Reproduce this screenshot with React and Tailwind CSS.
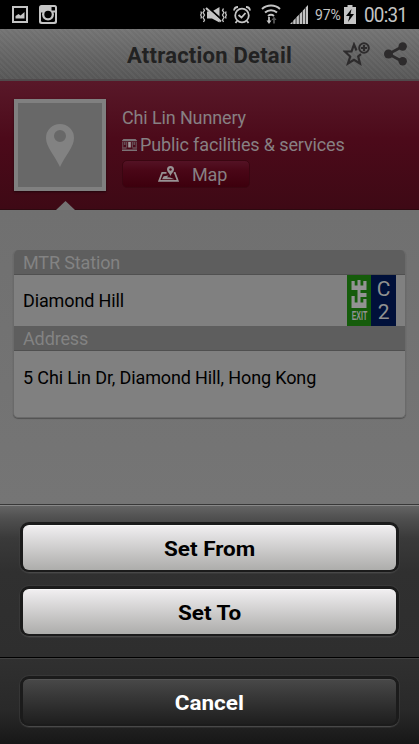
const details = {
  name: "Chi Lin Nunnery",
  category: "Public facilities & services",
  station: "Diamond Hill",
  exit: ["C", "2"],
  address: "5 Chi Lin Dr, Diamond Hill, Hong Kong",
}

function StatusBar() {
  return (
    <div className="h-[29px] bg-black flex items-center justify-between text-[#c4c4c4]">
      <div className="flex items-center gap-[11px] pl-3">
        <svg width="16" height="17" viewBox="0 0 16 17" fill="none">
          <rect x="1" y="1" width="14" height="15" stroke="currentColor" strokeWidth="2" />
          <path d="M3.500 12.500V10l3-2 2 1.500 4-3.500v6.500z" fill="currentColor" />
        </svg>
        <svg width="18" height="19" viewBox="0 0 18 19">
          <rect width="18" height="19" rx="2.500" fill="currentColor" />
          <path d="M2 7.500h14V15.500a1.500 1.500 0 0 1-1.500 1.500h-11A1.500 1.500 0 0 1 2 15.500z" fill="#000" />
          <circle cx="9" cy="9.500" r="6" fill="currentColor" />
          <circle cx="9" cy="9.500" r="3.700" fill="#000" />
          <rect x="12.500" y="2" width="3.500" height="3.500" rx=".5" fill="#000" />
        </svg>
      </div>

      <div className="flex items-center pr-[12px]">
        {/* vibrate / muted */}
        <svg className="mr-[6px]" width="27" height="20" viewBox="0 0 27 20" fill="none" stroke="currentColor">
          <path d="M3.500 3.500l1 2-1.500 2 1.500 2.500L3 12.500l1.500 2.500-1 2M.8 6.500l.7 1.500-.8 2 .8 2-.7 1.500" strokeWidth="1.300" />
          <path d="M23.500 3.500l-1 2 1.500 2-1.500 2.500 1.500 2.500-1.500 2.500 1 2M26.200 6.500l-.7 1.500.8 2-.8 2 .7 1.500" strokeWidth="1.300" />
          <path d="M7 6.500h5L19.500 2v15.500L12 13.500H7z" fill="currentColor" stroke="none" />
          <path d="M7.500 2l14 12.500" stroke="#000" strokeWidth="2" />
          <path d="M6 3l15 13.500" strokeWidth="2" />
        </svg>
        {/* alarm */}
        <svg className="mr-[10px]" width="18" height="20" viewBox="0 0 18 20" fill="none" stroke="currentColor" strokeWidth="1.800">
          <circle cx="9" cy="10.500" r="6.800" />
          <path d="M5.500 10l3 2.500L12.500 8M1 5.500a4 4 0 0 1 4-3.500M17 5.500a4 4 0 0 0-4-3.500M4 16l-1.500 2M14 16l1.500 2" />
        </svg>
        {/* wifi with traffic arrows */}
        <svg className="mr-[9px]" width="20" height="21" viewBox="0 0 20 21" fill="none" stroke="currentColor" strokeWidth="2">
          <path d="M1 5a13.500 13.500 0 0 1 18 0M4 8.500a9 9 0 0 1 12 0M7 12a4.800 4.800 0 0 1 6 0" />
          <path d="M8 13v5" strokeWidth="1.800" />
          <path d="M5.500 16.500h5L8 20z" fill="currentColor" stroke="none" />
          <path d="M13 19.500V15" stroke="#555" strokeWidth="1.800" />
          <path d="M10.500 16h5L13 12.500z" fill="#555" stroke="none" />
        </svg>
        <svg className="mr-[7px]" width="18" height="19" viewBox="0 0 18 19" fill="currentColor">
          <path d="M0 19l2.500-2.500V19zM3.200 15.700L5.700 13V19H3.200zM6.400 12.300l2.500-2.600V19H6.400zM9.600 9l2.500-2.600V19H9.600zM12.700 5.700L15 3.300V19h-2.300zM15.600 2.500L18 0v19h-2.400z" />
        </svg>
        <span className="text-[14px] leading-none w-[25px] whitespace-nowrap tracking-[-0.1px]">97%</span>
        <svg className="ml-[4px] mr-[8px]" width="12" height="19" viewBox="0 0 12 19">
          <path d="M3.500 0h5v2H12v17H0V2h3.500z" fill="currentColor" />
          <path d="M7.500 4L2 11h3.500L4 17l6-8H6.500z" fill="#000" />
        </svg>
        <span className="text-[20px] leading-none w-[43px] whitespace-nowrap tracking-[-0.8px] scale-x-[0.94] origin-left pt-px">00:31</span>
      </div>
    </div>
  )
}

function Header() {
  return (
    <div className="h-[52px] shrink-0 border-b-2 border-[#504a4c] bg-[repeating-linear-gradient(45deg,rgba(255,255,255,0.035)_0px,rgba(255,255,255,0.035)_2px,transparent_2px,transparent_4px),linear-gradient(#737373,#565656)] grid grid-cols-[1fr_auto_1fr] items-center text-[#222]">
      <span />
      <h1 className="text-[22px] font-bold leading-none pt-[3px] tracking-[0.24px]">Attraction Detail</h1>
      <div className="flex items-center justify-end gap-[13px] pr-3">
        <svg className="mr-px" width="27" height="25" viewBox="0 0 27 25" fill="none" stroke="#2d2b2c">
          <path d="M13.500 8.500L11 2.500L8.500 9.500H1.800l5.400 5L5 21.500l6-3.800 6 3.800-1.800-7 2.800-2.300" strokeWidth="2.200" />
          <circle cx="21" cy="6" r="4.800" strokeWidth="2" />
          <path d="M21 3v6M18 6h6" strokeWidth="2.200" />
        </svg>
        <svg width="23" height="24" viewBox="0 0 23 24" fill="#2d2b2c">
          <path d="M18.500 4.500L4.500 12l14 7.500" fill="none" stroke="#2d2b2c" strokeWidth="2.700" />
          <circle cx="18.700" cy="4.500" r="4.200" />
          <circle cx="4.500" cy="12" r="4.500" />
          <circle cx="18.700" cy="19.300" r="4.200" />
        </svg>
      </div>
    </div>
  )
}

function Hero() {
  return (
    <div className="relative h-[129px] flex items-start bg-linear-to-b from-[#591829] via-[#4c0a1a] via-45% to-[#3e0915] border-b border-[#2d0910] text-[#878083]">
      <div className="ml-[14px] mt-[18px] size-[92px] bg-[#686868] border-4 border-[#808080] shadow-[0_1px_2px_rgba(0,0,0,0.5)] flex items-center justify-center">
        <svg width="28" height="43" viewBox="0 0 28 43">
          <path d="M14 0a14 14 0 0 1 14 14c0 9-9 18-14 29C9 32 0 23 0 14A14 14 0 0 1 14 0zm0 6a6 6 0 1 0 0 12 6 6 0 0 0 0-12z" fill="#828282" fillRule="evenodd" />
        </svg>
      </div>
      <div className="ml-4 pt-[25px] text-[18px] leading-[24px] tracking-[-0.13px] whitespace-nowrap">
        <p>{details.name}</p>
        <div className="flex items-center gap-[3px] mt-[3px]">
          <svg width="15" height="12" viewBox="0 0 15 12">
            <path d="M0 10.500h15V12H0zM1.500 0h12L15 1.500v.7H0v-.7zM0 8.500h4.500v1H0zM10.500 8.500H15v1h-4.500z" fill="#7b7276" />
            <path d="M.3 3h1v5.500h-1zM2.200 3h1.200v3H2.200zM4.200 3h1v5.500h-1zM9.800 3h1v5.500h-1zM11.600 3h1.200v3h-1.200zM13.700 3h1v5.500h-1z" fill="#6d5d63" />
            <path d="M6.200 3h2.600v5.500H6.200z" fill="#a09a9c" />
          </svg>
          <p>{details.category}</p>
        </div>
        <button className="mt-[3px] w-[128px] h-[28px] rounded-[5px] border border-[#3a0611] bg-linear-to-b from-[#541225] via-[#4a0717] via-35% to-[#3d000d] flex items-center pl-[35px] gap-[13px]">
          <svg width="21" height="16" viewBox="0 0 21 16" fill="none" stroke="#989294">
            <path d="M8.500 6.800H4.200L1.200 14.800h18.600l-3-8h-1" strokeWidth="1.800" />
            <path d="M4 13.200h12.500l-4.500-1.700-3-.3 1.500-1.700-4.800.8z" fill="#989294" stroke="none" />
            <path d="M12.500 0A3.600 3.600 0 0 1 16 3.600c0 2.400-3 3.900-3.500 6.900-.5-3-3.500-4.500-3.500-6.900A3.600 3.600 0 0 1 12.500 0z" fill="#989294" stroke="none" />
            <circle cx="12.500" cy="3.500" r="1.200" fill="#4a0818" stroke="none" />
          </svg>
          <span className="pt-px">Map</span>
        </button>
      </div>
      {/* notch under the thumbnail */}
      <svg className="absolute left-[56px] -bottom-px" width="19" height="9" viewBox="0 0 19 9">
        <path d="M0 9L9.500 0L19 9z" fill="#747474" />
      </svg>
    </div>
  )
}

function SectionTitle({ children }) {
  return (
    <div className="h-[25px] shrink-0 bg-[#5e5e5e] border-b border-[#505050] pl-[9px] text-[18px] leading-[25px] text-[#838383]">
      {children}
    </div>
  )
}

function InfoCard() {
  return (
    <div className="mx-[13px] mt-[40px] h-[168px] rounded-[5px] bg-[#808080] border border-t-0 border-[#6a6a6a] overflow-hidden shadow-[0_1px_1px_rgba(0,0,0,0.3)] text-[18px] tracking-[-0.13px]">
      <SectionTitle>MTR Station</SectionTitle>
      <div className="h-[51px] flex items-center justify-between pl-[9px] pr-[9px] text-black">
        <span>{details.station}</span>
        <div className="flex h-full">
          <div className="w-6 bg-[#155c0b] flex flex-col items-center pt-[5px] text-[#939393]">
            <svg width="16" height="29" viewBox="0 0 16 29" fill="currentColor">
              <path d="M.5 1h3.200v4.500h2.800V0h3v5.500h2.800V1h3.200v9H9.500v3h6v4H9.500v5.500h2.800V19h3.200v9H.5V16h3.200v6.500h2.800V14.500V10H.5z" />
            </svg>
            <span className="font-['Liberation_Sans'] font-bold text-[13px] leading-[13px] tracking-normal scale-x-[0.54]">EXIT</span>
          </div>
          <div className="w-[25px] bg-[#00103a] text-[#909090] text-[21px] leading-[23px] flex flex-col items-center pt-[3px]">
            {details.exit.map((char) => (
              <span key={char}>{char}</span>
            ))}
          </div>
        </div>
      </div>
      <SectionTitle>Address</SectionTitle>
      <p className="pl-[9px] pt-[15px] leading-[24px] text-black whitespace-nowrap">{details.address}</p>
    </div>
  )
}

function SheetButton({ children, dark }) {
  return (
    <div className="h-[51px] rounded-[9px] bg-[#1b1b1b] border-b border-[#484848] pt-[3px] pb-[2px] px-[3px] shadow-[0_0_0_1px_rgba(75,75,75,0.35)]">
      <button
        className={
          "w-full h-full rounded-[6px] text-[21px] font-bold leading-none pt-[3px] " +
          (dark
            ? "bg-linear-to-b from-[#484848] to-[#1e1e1e] border-t border-[#555] text-white"
            : "bg-linear-to-b from-[#f0eef0] to-[#adadab] border-t border-[#f8f8f8] text-black")
        }
      >
        <span className="inline-block scale-x-[1.07]">{children}</span>
      </button>
    </div>
  )
}

function ActionSheet() {
  return (
    <div className="h-[240px] border-t border-[#383838] bg-linear-to-b from-[#303030] to-[#292929]">
      <div className="h-[153px] border-t border-t-[#888] border-b border-b-black bg-[linear-gradient(#646464_0px,#505050_12px,#3a3a3a_32px,#303030_65px,#2e2e2e)] px-5 pt-[16px] flex flex-col gap-[13px]">
        <SheetButton>Set From</SheetButton>
        <SheetButton>Set To</SheetButton>
      </div>
      <div className="h-[86px] border-t border-[#414141] bg-[linear-gradient(#303030,#292929_60%,#171717)] px-5 pt-[17px]">
        <SheetButton dark>Cancel</SheetButton>
      </div>
    </div>
  )
}

export default function App() {
  return (
    <div className="w-[419px] h-[744px] flex flex-col overflow-hidden bg-[#737373] font-[Roboto,sans-serif]">
      <StatusBar />
      <Header />
      <Hero />
      <div className="flex-1 bg-linear-to-b from-[#707070] to-[#757575]">
        <InfoCard />
      </div>
      <ActionSheet />
    </div>
  )
}
